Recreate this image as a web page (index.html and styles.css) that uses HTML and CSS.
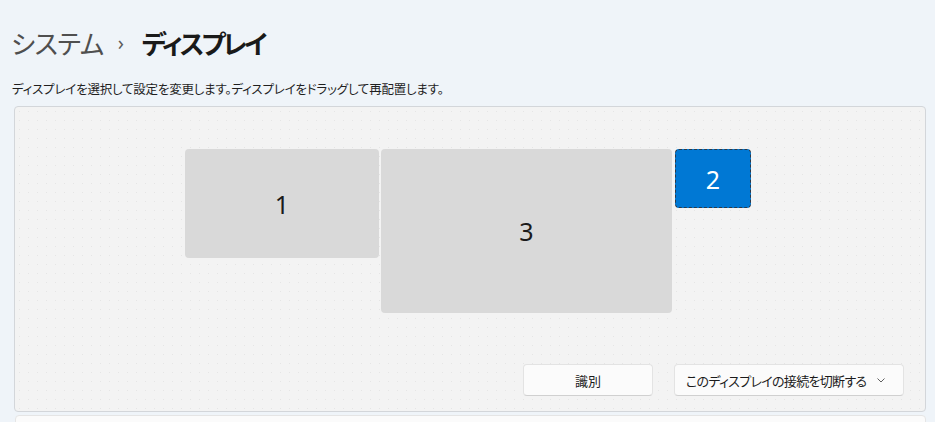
FILE: index.html
```html
<!DOCTYPE html>
<html lang="ja">
<head>
    <meta charset="UTF-8">
    <meta name="viewport" content="width=device-width, initial-scale=1.0">
    <title>ディスプレイ</title>
    <link rel="stylesheet" href="styles.css">
</head>
<body>
    <div class="page">
        <h1 class="breadcrumb">
            <span class="crumb-parent">システム</span>
            <span class="crumb-sep">›</span>
            <span class="crumb-current">ディスプレイ</span>
        </h1>
        <p class="hint">ディスプレイを選択して設定を変更します。ディスプレイをドラッグして再配置します。</p>

        <div class="panel">
            <div class="arrange">
                <div class="monitor m1">1</div>
                <div class="monitor m3">3</div>
                <div class="monitor m2 selected">2</div>
            </div>
            <div class="actions">
                <button class="btn btn-identify">識別</button>
                <button class="btn btn-drop">
                    <span>このディスプレイの接続を切断する</span>
                    <svg class="chev" width="10" height="10" viewBox="0 0 10 10">
                        <path d="M1.5 3.5 L5 7 L8.5 3.5" fill="none" stroke="#5f5f5f" stroke-width="1"/>
                    </svg>
                </button>
            </div>
        </div>

        <div class="card-next"></div>
    </div>
</body>
</html>
```

FILE: styles.css
```css
body {
    margin: 0;
    padding: 0;
    background-color: #eff4f9;
    font-family: "Noto Sans CJK JP", "Noto Sans", sans-serif;
    font-feature-settings: "palt";
    color: #1b1b1b;
    overflow: hidden;
}
.page {
    padding: 0 9px 0 14px;
}
.breadcrumb {
    margin: 0;
    padding-top: 20px;
    height: 45px;
    font-size: 26px;
    font-weight: normal;
    line-height: 36px;
    margin-left: -3px;
    display: flex;
    align-items: center;
}
.crumb-parent {
    color: #4f4f4f;
    letter-spacing: -0.5px;
}
.crumb-sep {
    color: #5c5c5c;
    font-size: 20px;
    margin: 0 18px 0 14px;
    font-family: "Noto Sans", sans-serif;
}
.crumb-current {
    font-weight: bold;
    color: #1a1a1a;
    letter-spacing: -2.8px;
}
.hint {
    margin: 16px 0 0 -2px;
    font-size: 12.5px;
    line-height: 16px;
    color: #1f1f1f;
    letter-spacing: -0.2px;
}
.panel {
    margin-top: 9px;
    height: 304px;
    border: 1px solid #d3d6da;
    border-radius: 4px;
    background-color: #f3f3f3;
    background-image: radial-gradient(rgba(0, 0, 0, 0.06) 0.6px, transparent 0.8px);
    background-size: 9px 9px;
    display: flex;
    flex-direction: column;
}
.arrange {
    position: relative;
    flex: 1;
}
.monitor {
    position: absolute;
    top: 42px;
    background-color: #d9d9d9;
    border-radius: 4px;
    display: flex;
    align-items: center;
    justify-content: center;
    font-family: "Noto Sans", sans-serif;
    font-size: 25px;
    color: #1b1b1b;
}
.m1 {
    left: 170px;
    width: 194px;
    height: 109px;
}
.m3 {
    left: 366px;
    width: 291px;
    height: 164px;
}
.m2 {
    left: 660px;
    width: 74px;
    height: 57px;
}
.monitor.selected {
    background-color: #0078d4;
    border: 1px dashed #2b3a4a;
    color: #fff;
}
.actions {
    display: flex;
    justify-content: flex-end;
    gap: 21px;
    padding: 0 21px 15px 0;
}
.btn {
    height: 32px;
    border: 1px solid #e3e3e3;
    border-bottom-color: #d0d0d0;
    border-radius: 4px;
    background-color: #fbfbfb;
    font-family: "Noto Sans CJK JP", sans-serif;
    font-feature-settings: "palt";
    font-size: 13px;
    color: #1b1b1b;
    padding: 0;
    white-space: nowrap;
}
.btn-identify {
    width: 130px;
}
.btn-drop {
    width: 230px;
    display: flex;
    align-items: center;
    justify-content: space-between;
    padding: 0 17px 0 11px;
    letter-spacing: -0.7px;
}
.chev {
    display: block;
    flex-shrink: 0;
}
.card-next {
    margin-top: 3px;
    height: 40px;
    background-color: #fbfbfb;
    border: 1px solid #e5e5e5;
    border-radius: 4px;
    margin-left: 1px;
}
```
